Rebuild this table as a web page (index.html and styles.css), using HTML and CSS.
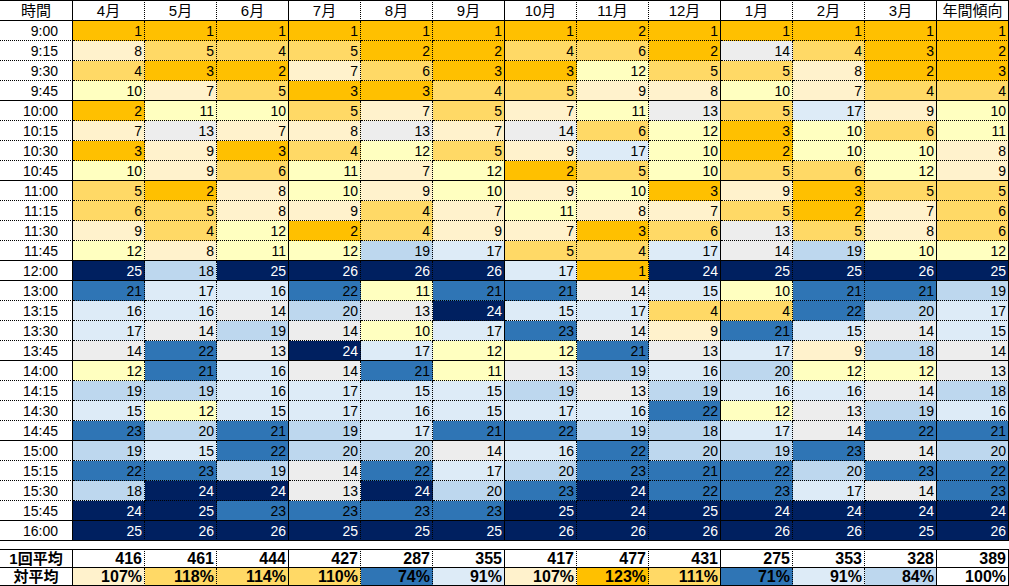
FILE: index.html
```html
<!DOCTYPE html>
<html lang="ja">
<head>
<meta charset="utf-8">
<title>時間帯別 年間傾向</title>
<link rel="stylesheet" href="styles.css">
</head>
<body>
<main class="sheet">
  <section class="grid">
    <div class="row head"><div>時間</div><div>4月</div><div>5月</div><div>6月</div><div>7月</div><div>8月</div><div>9月</div><div>10月</div><div>11月</div><div>12月</div><div>1月</div><div>2月</div><div>3月</div><div>年間傾向</div></div>
    <div class="row"><div class="t">9:00</div><div class="a">1</div><div class="a">1</div><div class="a">1</div><div class="a">1</div><div class="a">1</div><div class="a">1</div><div class="a">1</div><div class="a">2</div><div class="a">1</div><div class="a">1</div><div class="a">1</div><div class="a">1</div><div class="a">1</div></div>
    <div class="row"><div class="t">9:15</div><div class="c">8</div><div class="b">5</div><div class="b">4</div><div class="b">5</div><div class="a">2</div><div class="a">2</div><div class="b">4</div><div class="b">6</div><div class="a">2</div><div class="e">14</div><div class="b">4</div><div class="a">3</div><div class="a">2</div></div>
    <div class="row"><div class="t">9:30</div><div class="b">4</div><div class="a">3</div><div class="a">2</div><div class="c">7</div><div class="b">6</div><div class="a">3</div><div class="a">3</div><div class="d">12</div><div class="b">5</div><div class="b">5</div><div class="c">8</div><div class="a">2</div><div class="a">3</div></div>
    <div class="row hr"><div class="t">9:45</div><div class="d">10</div><div class="c">7</div><div class="b">5</div><div class="a">3</div><div class="a">3</div><div class="b">4</div><div class="b">5</div><div class="c">9</div><div class="c">8</div><div class="d">10</div><div class="c">7</div><div class="b">4</div><div class="b">4</div></div>
    <div class="row"><div class="t">10:00</div><div class="a">2</div><div class="d">11</div><div class="d">10</div><div class="b">5</div><div class="c">7</div><div class="b">5</div><div class="c">7</div><div class="d">11</div><div class="e">13</div><div class="b">5</div><div class="f">17</div><div class="c">9</div><div class="d">10</div></div>
    <div class="row"><div class="t">10:15</div><div class="c">7</div><div class="e">13</div><div class="c">7</div><div class="c">8</div><div class="e">13</div><div class="c">7</div><div class="e">14</div><div class="b">6</div><div class="d">12</div><div class="a">3</div><div class="d">10</div><div class="b">6</div><div class="d">11</div></div>
    <div class="row"><div class="t">10:30</div><div class="a">3</div><div class="c">9</div><div class="a">3</div><div class="b">4</div><div class="d">12</div><div class="b">5</div><div class="c">9</div><div class="f">17</div><div class="d">10</div><div class="a">2</div><div class="d">10</div><div class="d">10</div><div class="c">8</div></div>
    <div class="row hr"><div class="t">10:45</div><div class="d">10</div><div class="c">9</div><div class="b">6</div><div class="d">11</div><div class="c">7</div><div class="d">12</div><div class="a">2</div><div class="b">5</div><div class="d">10</div><div class="b">5</div><div class="b">6</div><div class="d">12</div><div class="c">9</div></div>
    <div class="row"><div class="t">11:00</div><div class="b">5</div><div class="a">2</div><div class="c">8</div><div class="d">10</div><div class="c">9</div><div class="d">10</div><div class="c">9</div><div class="d">10</div><div class="a">3</div><div class="c">9</div><div class="a">3</div><div class="b">5</div><div class="b">5</div></div>
    <div class="row"><div class="t">11:15</div><div class="b">6</div><div class="b">5</div><div class="c">8</div><div class="c">9</div><div class="b">4</div><div class="c">7</div><div class="d">11</div><div class="c">8</div><div class="c">7</div><div class="b">5</div><div class="a">2</div><div class="c">7</div><div class="b">6</div></div>
    <div class="row"><div class="t">11:30</div><div class="c">9</div><div class="b">4</div><div class="d">12</div><div class="a">2</div><div class="b">4</div><div class="c">9</div><div class="c">7</div><div class="a">3</div><div class="b">6</div><div class="e">13</div><div class="b">5</div><div class="c">8</div><div class="b">6</div></div>
    <div class="row hr"><div class="t">11:45</div><div class="d">12</div><div class="c">8</div><div class="d">11</div><div class="d">12</div><div class="g">19</div><div class="f">17</div><div class="b">5</div><div class="b">4</div><div class="f">17</div><div class="e">14</div><div class="g">19</div><div class="d">10</div><div class="d">12</div></div>
    <div class="row hr"><div class="t">12:00</div><div class="i">25</div><div class="g">18</div><div class="i">25</div><div class="i">26</div><div class="i">26</div><div class="i">26</div><div class="f">17</div><div class="a">1</div><div class="i">24</div><div class="i">25</div><div class="i">25</div><div class="i">26</div><div class="i">25</div></div>
    <div class="row"><div class="t">13:00</div><div class="h">21</div><div class="f">17</div><div class="f">16</div><div class="h">22</div><div class="d">11</div><div class="h">21</div><div class="h">21</div><div class="e">14</div><div class="f">15</div><div class="d">10</div><div class="h">21</div><div class="h">21</div><div class="g">19</div></div>
    <div class="row"><div class="t">13:15</div><div class="f">16</div><div class="f">16</div><div class="e">14</div><div class="g">20</div><div class="e">13</div><div class="i">24</div><div class="f">15</div><div class="f">17</div><div class="b">4</div><div class="b">4</div><div class="h">22</div><div class="g">20</div><div class="f">17</div></div>
    <div class="row"><div class="t">13:30</div><div class="f">17</div><div class="e">14</div><div class="g">19</div><div class="e">14</div><div class="d">10</div><div class="f">17</div><div class="h">23</div><div class="e">14</div><div class="c">9</div><div class="h">21</div><div class="f">15</div><div class="e">14</div><div class="f">15</div></div>
    <div class="row hr"><div class="t">13:45</div><div class="e">14</div><div class="h">22</div><div class="e">13</div><div class="i">24</div><div class="f">17</div><div class="d">12</div><div class="d">12</div><div class="h">21</div><div class="e">13</div><div class="f">17</div><div class="c">9</div><div class="g">18</div><div class="e">14</div></div>
    <div class="row"><div class="t">14:00</div><div class="d">12</div><div class="h">21</div><div class="f">16</div><div class="e">14</div><div class="h">21</div><div class="d">11</div><div class="e">13</div><div class="g">19</div><div class="f">16</div><div class="g">20</div><div class="d">12</div><div class="d">12</div><div class="e">13</div></div>
    <div class="row"><div class="t">14:15</div><div class="g">19</div><div class="g">19</div><div class="f">16</div><div class="f">17</div><div class="f">15</div><div class="f">15</div><div class="g">19</div><div class="e">13</div><div class="g">19</div><div class="f">16</div><div class="f">16</div><div class="e">14</div><div class="g">18</div></div>
    <div class="row"><div class="t">14:30</div><div class="f">15</div><div class="d">12</div><div class="f">15</div><div class="f">17</div><div class="f">16</div><div class="f">15</div><div class="f">17</div><div class="f">16</div><div class="h">22</div><div class="d">12</div><div class="e">13</div><div class="g">19</div><div class="f">16</div></div>
    <div class="row hr"><div class="t">14:45</div><div class="h">23</div><div class="g">20</div><div class="h">21</div><div class="g">19</div><div class="f">17</div><div class="h">21</div><div class="h">22</div><div class="g">19</div><div class="g">18</div><div class="f">17</div><div class="e">14</div><div class="h">22</div><div class="h">21</div></div>
    <div class="row"><div class="t">15:00</div><div class="g">19</div><div class="f">15</div><div class="h">22</div><div class="g">20</div><div class="g">20</div><div class="e">14</div><div class="f">16</div><div class="h">22</div><div class="g">20</div><div class="g">19</div><div class="h">23</div><div class="e">14</div><div class="g">20</div></div>
    <div class="row"><div class="t">15:15</div><div class="h">22</div><div class="h">23</div><div class="g">19</div><div class="e">14</div><div class="h">22</div><div class="f">17</div><div class="g">20</div><div class="h">23</div><div class="h">21</div><div class="h">22</div><div class="g">20</div><div class="h">23</div><div class="h">22</div></div>
    <div class="row"><div class="t">15:30</div><div class="g">18</div><div class="i">24</div><div class="i">24</div><div class="e">13</div><div class="i">24</div><div class="g">20</div><div class="h">23</div><div class="i">24</div><div class="h">22</div><div class="h">23</div><div class="f">17</div><div class="e">14</div><div class="h">23</div></div>
    <div class="row hr"><div class="t">15:45</div><div class="i">24</div><div class="i">25</div><div class="h">23</div><div class="h">23</div><div class="h">23</div><div class="h">23</div><div class="i">25</div><div class="i">24</div><div class="i">25</div><div class="i">24</div><div class="i">24</div><div class="i">24</div><div class="i">24</div></div>
    <div class="row hr"><div class="t">16:00</div><div class="i">25</div><div class="i">26</div><div class="i">26</div><div class="i">25</div><div class="i">25</div><div class="i">25</div><div class="i">26</div><div class="i">26</div><div class="i">26</div><div class="i">26</div><div class="i">26</div><div class="i">25</div><div class="i">26</div></div>
  </section>
  <section class="grid summary">
    <div class="row"><div class="lbl">1回平均</div><div>416</div><div>461</div><div>444</div><div>427</div><div>287</div><div>355</div><div>417</div><div>477</div><div>431</div><div>275</div><div>353</div><div>328</div><div>389</div></div>
    <div class="row"><div class="lbl">対平均</div><div class="c">107%</div><div class="b">118%</div><div class="b">114%</div><div class="b">110%</div><div class="h">74%</div><div class="f">91%</div><div class="c">107%</div><div class="a">123%</div><div class="b">111%</div><div class="h">71%</div><div class="f">91%</div><div class="g">84%</div><div>100%</div></div>
  </section>
</main>
</body>
</html>
```

FILE: styles.css
```css
body {
  margin: 0;
  background: #fff;
  color: #000;
  font-family: "Liberation Sans", "Noto Sans CJK JP", sans-serif;
}

.sheet {
  width: 1009px;
}

.row {
  display: grid;
  grid-template-columns: 73px repeat(13, 72px);
}

.row > div {
  box-sizing: border-box;
  height: 20px;
  padding: 2px 2px 0 0;
  border-right: 1px dotted #000;
  border-bottom: 1px dotted #000;
  background: #fff;
  text-align: right;
  font-size: 14px;
  line-height: 17px;
  white-space: nowrap;
  overflow: hidden;
}

.row > div:nth-child(3n+1),
.row > div:last-child {
  border-right-style: solid;
}

.row.hr > div {
  border-bottom-style: solid;
}

.row.head > div {
  height: 21px;
  padding: 0;
  border-top: 1px solid #000;
  border-bottom-style: solid;
  text-align: center;
  font-size: 15px;
  line-height: 19px;
}

.row > .t {
  padding-right: 14px;
}

.summary {
  margin-top: 8px;
}

.summary .row > div {
  height: 18px;
  padding: 0 2px 0 0;
  border-bottom-style: solid;
  font-weight: bold;
  font-size: 16px;
  line-height: 17px;
}

.summary .row:first-child > div {
  height: 19px;
  border-top: 1px solid #000;
}

.summary .row > .lbl {
  padding: 0;
  text-align: center;
  font-size: 15px;
}

/* colour scale */
.row > .a { background: #ffc000; }
.row > .b { background: #ffd966; }
.row > .c { background: #fff2cc; }
.row > .d { background: #ffffc0; }
.row > .e { background: #ededed; }
.row > .f { background: #ddebf7; }
.row > .g { background: #bdd7ee; }
.row > .h { background: #2f75b5; }
.row > .i { background: #002060; color: #fff; }
```
